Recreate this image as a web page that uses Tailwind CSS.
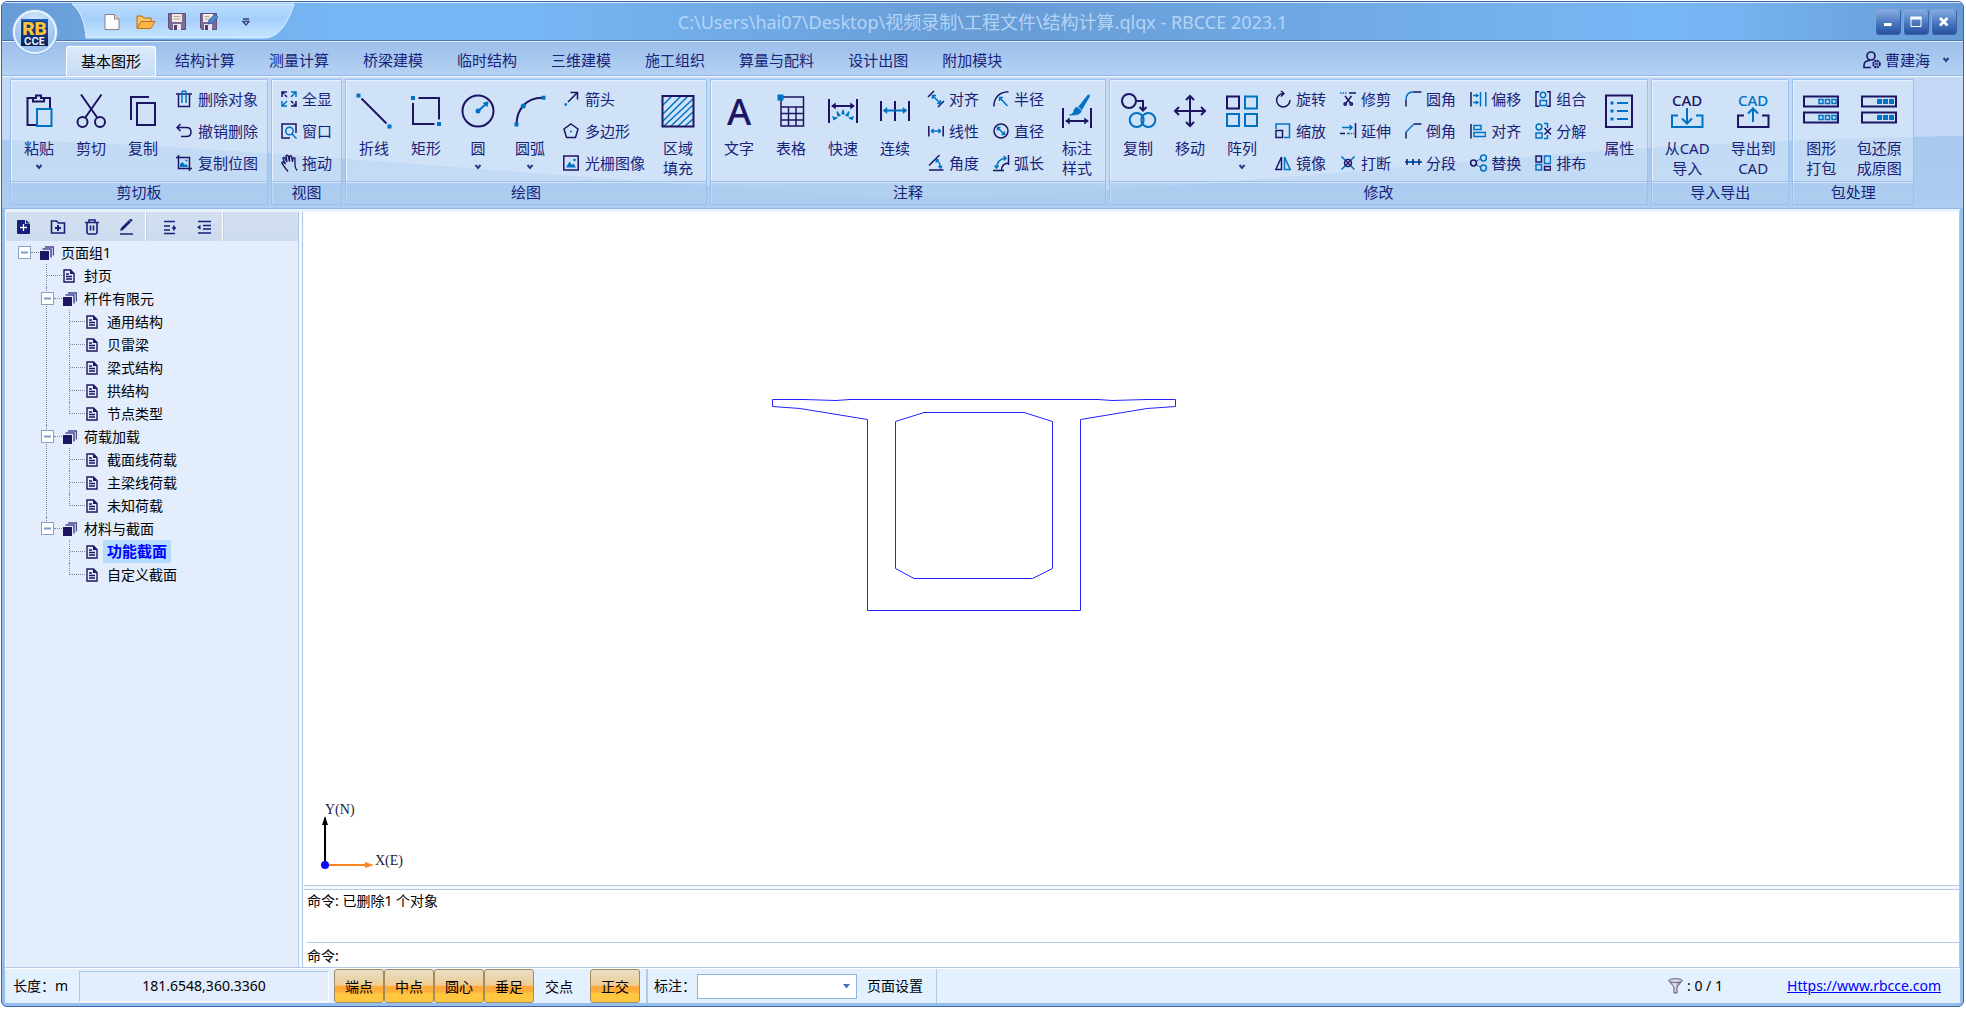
<!DOCTYPE html>
<html lang="zh-CN">
<head>
<meta charset="utf-8">
<title>RBCCE 2023.1</title>
<script src="https://cdn.jsdelivr.net/npm/@tailwindcss/browser@4"></script>
</head>
<body class="h-screen overflow-hidden bg-white pt-px pr-[2px] pb-[2px] pl-px font-['Noto_Sans','Noto_Sans_CJK_SC',sans-serif] text-sm text-black">
<div class="relative flex h-full flex-col overflow-hidden rounded-md border border-[#3c66a8] bg-[#96bfee]">

  <!-- Title bar -->
  <header class="relative flex h-[39px] shrink-0 items-center border-t border-b border-t-[#d5e8fc] border-b-[#4a74b8] bg-[linear-gradient(90deg,#679cd5_0%,#77b6f5_17%,#77b6f5_27%,#679cd5_50%,#77b6f5_84%,#76b4f3_88%,#659ad3_100%)]">
    <svg class="absolute top-0 left-[66px] h-[36px] w-[230px]" viewBox="0 0 230 36" fill="none">
      <defs><linearGradient id="qa" x1="0" y1="0" x2="0" y2="1"><stop offset="0" stop-color="#b9dcfd"/><stop offset=".45" stop-color="#a5d0fb"/><stop offset="1" stop-color="#c6e4fe"/></linearGradient></defs>
      <path d="M4 1C13 8 17 20 18 35H196C212 35 221 17 226 1Z" fill="url(#qa)" stroke="#dceefe"/>
    </svg>
    <nav class="relative ml-[102px] flex items-center gap-4">
      <button aria-label="新建"><svg class="size-4" viewBox="0 0 16 16"><path d="M1 .5h9.500L15 5v10.500H1Z" fill="#fff" stroke="#8d7f82"/><path d="M10.500.5V5H15" fill="#e8dcd4" stroke="#8d7f82"/></svg></button>
      <button aria-label="打开"><svg class="-mr-1 h-4 w-5" viewBox="0 0 20 16"><path d="M1 14V2h5l2 2h7v4" fill="#f7c56e" stroke="#b8690f"/><path d="M1 14.500 5 7.500h14l-4 7Z" fill="#fdb64a" stroke="#c46f14"/></svg></button>
      <button aria-label="保存"><svg class="-mr-0.5 size-[18px]" viewBox="0 0 18 18"><path d="M.5.5h17v16H2L.5 15Z" fill="#7c6c94" stroke="#5e4f7c"/><path d="M4 1h10v8H4Z" fill="#f2ece4"/><path d="M5.500 3.500h7M5.500 6h7" stroke="#b9a58f"/><path d="M5 11h8v6H5Z" fill="#e9e4ee"/><path d="M6 12h3v5H6Z" fill="#4e3f6c"/></svg></button>
      <button aria-label="另存为"><svg class="size-[18px]" viewBox="0 0 18 18"><path d="M.5.5h16v16H2L.5 15Z" fill="#7c6c94" stroke="#5e4f7c"/><path d="M3 1h10v8H3Z" fill="#f2ece4"/><path d="M4.500 3.500h5M4.500 6h5" stroke="#b9a58f"/><path d="M4 11h8v6H4Z" fill="#e9e4ee"/><path d="M5 12h3v5H5Z" fill="#4e3f6c"/><path d="M8 11 9 7l6-6 3 3-6 6Z" fill="#4f86c9" stroke="#2f5fa3" stroke-width=".8"/></svg></button>
      <button aria-label="自定义快速访问工具栏" class="ml-2"><svg class="h-2 w-2" viewBox="0 0 8 8" fill="none"><path d="M1 1h6M1 3.500 4 7l3-3.500Z" stroke="#2a4280" stroke-width="1.300" fill="#fff"/></svg></button>
    </nav>
    <h1 class="absolute inset-x-0 mx-auto w-fit text-lg whitespace-nowrap text-[#b4d4f6]">C:\Users\hai07\Desktop\视频录制\工程文件\结构计算.qlqx - RBCCE 2023.1</h1>
    <div class="relative mr-[6px] ml-auto flex gap-[2px]">
      <button aria-label="最小化" class="flex size-[26px] items-center justify-center rounded-sm border border-[#3d62a8] border-t-[#7fa6dc] border-l-[#7fa6dc] bg-linear-to-b from-[#86aadf] via-[#4e7cc2] to-[#28509f]"><svg class="size-4" viewBox="0 0 16 16"><path d="M4 10.500h7.500" stroke="#fff" stroke-width="3"/></svg></button>
      <button aria-label="最大化" class="flex size-[26px] items-center justify-center rounded-sm border border-[#3d62a8] border-t-[#7fa6dc] border-l-[#7fa6dc] bg-linear-to-b from-[#86aadf] via-[#4e7cc2] to-[#28509f]"><svg class="size-4" viewBox="0 0 16 16" fill="none"><path d="M3 3.500h10v9H3Z" stroke="#fff"/><path d="M2.500 4h11" stroke="#fff" stroke-width="3"/></svg></button>
      <button aria-label="关闭" class="flex size-[26px] items-center justify-center rounded-sm border border-[#3d62a8] border-t-[#7fa6dc] border-l-[#7fa6dc] bg-linear-to-b from-[#86aadf] via-[#4e7cc2] to-[#28509f]"><svg class="size-4" viewBox="0 0 16 16"><path d="m4 4 7.500 7.500m0-7.500L4 11.500" stroke="#fff" stroke-width="2.600"/></svg></button>
    </div>
  </header>

  <!-- Ribbon tabs -->
  <div class="flex h-[34px] shrink-0 items-end border-t border-[#e6f1fd] bg-linear-to-b from-[#9bbfeb] to-[#b4d1f2] pl-16 text-[15px] text-[#17237a]">
    <nav class="flex h-[29px] gap-1 whitespace-nowrap">
      <button class="relative z-10 -mb-px h-[30px] rounded-t-[3px] border border-b-0 border-white bg-linear-to-b from-[#dceafa] to-[#c6dbf5] px-[14px] text-black">基本图形</button>
      <button class="px-[15px]">结构计算</button>
      <button class="px-[15px]">测量计算</button>
      <button class="px-[15px]">桥梁建模</button>
      <button class="px-[15px]">临时结构</button>
      <button class="px-[15px]">三维建模</button>
      <button class="px-[15px]">施工组织</button>
      <button class="px-[15px]">算量与配料</button>
      <button class="px-[15px]">设计出图</button>
      <button class="px-[15px]">附加模块</button>
    </nav>
    <button class="mr-[13px] mb-[4px] ml-auto flex items-center gap-1">
      <svg class="size-[18px]" viewBox="0 0 18 18" fill="none" stroke="#1e1464" stroke-width="1.600"><circle cx="8" cy="5" r="4"/><path d="M8 16.500H1v-2C1 11 3.500 9.500 7 9.500"/><circle cx="13.500" cy="13" r="3.300" stroke-dasharray="2 .6" stroke-width="2"/><circle cx="13.500" cy="13" r="1" stroke-width="1"/></svg>
      <span>曹建海</span>
      <svg class="ml-2 size-2" viewBox="0 0 8 8" fill="none"><path d="m1.500 2 2.500 3 2.500-3" stroke="#2a3a86" stroke-width="2"/></svg>
    </button>
  </div>

  <!-- Ribbon -->
  <section class="relative flex h-[134px] shrink-0 gap-[3px] border-y border-[#8fb6e6] bg-[#c3d9f5] fill-none stroke-[#1e1464] stroke-2 pt-[3px] pl-2 text-[15px] leading-5 whitespace-nowrap text-[#17237a] shadow-[inset_0_1px_0_#f4f9ff]">
    <svg class="absolute inset-0 size-full" viewBox="0 0 1960 132" preserveAspectRatio="none" stroke="none">
      <defs><linearGradient id="wv" x1="0" y1="0" x2="0" y2="1"><stop offset="0" stop-color="#9cc0ec" stop-opacity=".65"/><stop offset="1" stop-color="#aecdf1"/></linearGradient></defs>
      <path d="M0 64C260 70 560 104 900 122C1250 118 1500 66 1960 60V132H0Z" fill="url(#wv)"/>
    </svg>

    <div class="relative flex flex-col self-start border border-[#9dc0ea] bg-[#dcebfa]/50 shadow-[inset_1px_1px_0_#e8f2fd]">
      <div class="flex h-[101px] px-[2px] pt-[3px]">
        <button class="flex w-[52px] flex-col items-center pt-[10px]"><svg class="mb-[9px] size-9" viewBox="0 0 36 36"><path d="M15 32H6.500V5H12M23 5h6v10M12 8.500V5h3V2.500h5V5h3v3.500Z"/><path d="M16 16h14.500v17H16Z" stroke="#0072c4"/></svg>粘贴<svg class="mt-[5px] size-2" viewBox="0 0 8 8"><path d="m1.500 2 2.500 3 2.500-3" stroke="#2a3a86"/></svg></button>
        <button class="flex w-[52px] flex-col items-center pt-[10px]"><svg class="mb-[9px] size-9" viewBox="0 0 36 36"><circle cx="9.500" cy="29" r="5"/><circle cx="27" cy="29" r="5"/><path d="M8 1.500 24.500 25M28.500 1.500 12 25"/></svg>剪切</button>
        <button class="flex w-[52px] flex-col items-center pt-[10px]"><svg class="mb-[9px] size-9" viewBox="0 0 36 36"><path d="M24 4H6v23M12 10h18v22H12Z"/></svg>复制</button>
        <div class="flex flex-col">
          <button class="flex h-8 items-center gap-[6px] px-[7px]"><svg class="size-4 overflow-visible stroke-[1.500]" viewBox="0 0 16 16"><path d="M0 3h16M2.500 3v12.500h11V3"/><path d="M6 12V1.500Q6 0 8 0t2 1.500V12" stroke="#0072c4"/></svg>删除对象</button>
          <button class="flex h-8 items-center gap-[6px] px-[7px]"><svg class="size-4 stroke-[1.500]" viewBox="0 0 16 16"><path d="M4.500 1 1 4.500 4.500 8M1 4.500h9.500q4.500 0 4.500 4.500t-4.500 4.500H5"/></svg>撤销删除</button>
          <button class="flex h-8 items-center gap-[6px] px-[7px]"><svg class="size-4 stroke-[1.500]" viewBox="0 0 16 16"><path d="M2.500 0v13.500H16M0 2.500h13.500V16"/><path d="M4 12V9l2.500-2 2.500 3 1.500-1L12 12Z" fill="#0072c4" stroke="none"/><path d="M9.500 5.500h2" stroke="#0072c4"/></svg>复制位图</button>
        </div>
      </div>
      <h2 class="h-[23px] border-t border-[#9dc0ea] bg-[#96bdea]/50 text-center leading-5 shadow-[inset_0_1px_0_#d5e6fa]">剪切板</h2>
    </div>

    <div class="relative flex flex-col self-start border border-[#9dc0ea] bg-[#dcebfa]/50 shadow-[inset_1px_1px_0_#e8f2fd]">
      <div class="flex h-[101px] px-[2px] pt-[3px]">
        <div class="flex flex-col">
          <button class="flex h-8 items-center gap-[5px] px-[7px]"><svg class="size-4 stroke-[1.500]" viewBox="0 0 16 16"><path d="M1 6V1h5M10 15h5v-5"/><path d="M1 1l5 5M10 10l5 5" stroke-dasharray="3 1"/><path d="M10 1h5v5M6 15H1v-5M15 1l-5 5M1 15l5-5" stroke="#0072c4"/></svg>全显</button>
          <button class="flex h-8 items-center gap-[5px] px-[7px]"><svg class="size-4 stroke-[1.500]" viewBox="0 0 16 16"><path d="M9 15H1V1h14v9"/><circle cx="8.500" cy="8" r="3.700" stroke="#0072c4"/><path d="m11 11 4.500 4.500" stroke="#0072c4"/></svg>窗口</button>
          <button class="flex h-8 items-center gap-[5px] px-[7px]"><svg class="size-4 overflow-visible stroke-[1.300]" viewBox="0 0 16 16"><path d="M5 14 1 8.500Q.5 7 2 7l2.500 2L2 3.500Q2 2 3.500 2.500L6 7 5 1q.5-1.500 2-.5l1.500 6V1.500Q10 0 10.500 1.500l1 5.500.5-4q1.500-1 2 .5V10q0 3 2 5.500M5 14l2 2.500"/></svg>拖动</button>
        </div>
      </div>
      <h2 class="h-[23px] border-t border-[#9dc0ea] bg-[#96bdea]/50 text-center leading-5 shadow-[inset_0_1px_0_#d5e6fa]">视图</h2>
    </div>

    <div class="relative flex flex-col self-start border border-[#9dc0ea] bg-[#dcebfa]/50 shadow-[inset_1px_1px_0_#e8f2fd]">
      <div class="flex h-[101px] px-[2px] pt-[3px]">
        <button class="flex w-[52px] flex-col items-center pt-[10px]"><svg class="mb-[9px] size-9" viewBox="0 0 36 36"><path d="m5.500 5.500 25 25"/><path d="M.5 2.500H4.500M31.500 33.500h4" stroke="#0072c4" stroke-width="4"/></svg>折线</button>
        <button class="flex w-[52px] flex-col items-center pt-[10px]"><svg class="mb-[9px] size-9" viewBox="0 0 36 36"><path d="M10.500 5H31v21.500M5 10v21h21.500"/><path d="M3 5h4M29 31h4" stroke="#0072c4" stroke-width="4"/></svg>矩形</button>
        <button class="flex w-[52px] flex-col items-center pt-[10px]"><svg class="mb-[9px] size-9" viewBox="0 0 36 36"><circle cx="18" cy="18" r="15.500"/><g stroke="#0072c4"><circle cx="18" cy="18" r="1.500" fill="#0072c4"/><path d="m18 18 8-7"/><path d="m23.500 10 4.500-1-1 4.500Z" fill="#0072c4" stroke-width="1"/></g></svg>圆<svg class="mt-[5px] size-2" viewBox="0 0 8 8"><path d="m1.500 2 2.500 3 2.500-3" stroke="#2a3a86"/></svg></button>
        <button class="flex w-[52px] flex-col items-center pt-[10px]"><svg class="mb-[9px] size-9" viewBox="0 0 36 36"><path d="M4.500 31C5 15 15 5 30 4.700"/><path d="M2.500 31.500h4M29.500 4.700h4" stroke="#0072c4" stroke-width="4"/><circle cx="11.300" cy="13" r="2.500" fill="#0072c4" stroke="none"/></svg>圆弧<svg class="mt-[5px] size-2" viewBox="0 0 8 8"><path d="m1.500 2 2.500 3 2.500-3" stroke="#2a3a86"/></svg></button>
        <div class="flex flex-col">
          <button class="flex h-8 items-center gap-[6px] px-[7px]"><svg class="size-4 stroke-[1.500]" viewBox="0 0 16 16"><path d="m5 11 9.500-9.500M7.500 1.500h7v7"/><path d="M1.500 13.500h2.500" stroke="#0072c4" stroke-width="2.500"/></svg>箭头</button>
          <button class="flex h-8 items-center gap-[6px] px-[7px]"><svg class="size-4 stroke-[1.500]" viewBox="0 0 16 16"><path d="m8 1 7 5-2.500 8.500h-9L1 6Z"/><path d="M7 8.500h2" stroke="#0072c4"/></svg>多边形</button>
          <button class="flex h-8 items-center gap-[6px] px-[7px]"><svg class="size-4 stroke-[1.500]" viewBox="0 0 16 16"><path d="M.8 1h14.400v14H.8Z"/><path d="m3 12.500 3.500-6L9 10l1.500-1.500 2.500 4Z" fill="#0072c4" stroke="none"/><circle cx="11.500" cy="5" r="1.300" fill="#0072c4" stroke="none"/></svg>光栅图像</button>
        </div>
        <button class="flex w-[52px] flex-col items-center pt-[10px]"><svg class="mb-[9px] size-9" viewBox="0 0 36 36"><path d="M3 12 12 3M3 21 21 3M3 28 28 3M4 33 33 6M11 33 33 12M18 33 33 19M25 33l8-7" stroke="#0072c4" stroke-width="1.500"/><path d="M2.500 3h31v30.500h-31Z"/></svg>区域<br>填充</button>
      </div>
      <h2 class="h-[23px] border-t border-[#9dc0ea] bg-[#96bdea]/50 text-center leading-5 shadow-[inset_0_1px_0_#d5e6fa]">绘图</h2>
    </div>

    <div class="relative flex flex-col self-start border border-[#9dc0ea] bg-[#dcebfa]/50 shadow-[inset_1px_1px_0_#e8f2fd]">
      <div class="flex h-[101px] px-[2px] pt-[3px]">
        <button class="flex w-[52px] flex-col items-center pt-[10px]"><span class="mb-[9px] flex h-9 items-center text-[37px] font-medium text-[#1e1464]">A</span>文字</button>
        <button class="flex w-[52px] flex-col items-center pt-[10px]"><svg class="mb-[9px] size-9" viewBox="0 0 36 36"><path d="M8 4h22.500v29H8Z" stroke-width="1.500"/><path d="M8 14h22.500M8 20.500h22.500M8 27h22.500M15.500 14v19M23 14v19" stroke-width="1.500"/><path d="M4.500 4.500h6" stroke="#0072c4" stroke-width="6"/></svg>表格</button>
        <button class="flex w-[52px] flex-col items-center pt-[10px]"><svg class="mb-[9px] size-9" viewBox="0 0 36 36"><path d="M4 6v24M32 6v24M7 13h22"/><path d="m10.500 10-4 3 4 3ZM25.500 10l4 3-4 3Z" fill="#1e1464" stroke-width=".5"/><path d="m8 24 3.500 1-2.500 1.500ZM12 18.500l3 4-2 .5ZM18 17l1 4h-2ZM24 18.500l-3 4 2 .5ZM28 24l-3.500 1 2.500 1.500Z" fill="#0072c4" stroke="#0072c4" stroke-width="1.200"/></svg>快速</button>
        <button class="flex w-[52px] flex-col items-center pt-[10px]"><svg class="mb-[9px] size-9" viewBox="0 0 36 36"><path d="M4 8v20M18 8v20M32 8v20"/><g stroke="#0072c4" fill="#0072c4"><path d="M7 17.500h22"/><path d="m10 14.500-4 3 4 3ZM26 14.500l4 3-4 3Z" stroke-width=".5"/></g></svg>连续</button>
        <div class="flex flex-col">
          <button class="flex h-8 items-center gap-[5px] px-[7px]"><svg class="size-4 overflow-visible stroke-[1.500]" viewBox="0 0 16 16"><path d="M0 6 6 0M10 16l6-6"/><path d="m5 5 7 7M4.500 8V4.500H8M9 12.500h3.500V9" stroke="#0072c4"/></svg>对齐</button>
          <button class="flex h-8 items-center gap-[5px] px-[7px]"><svg class="size-4 stroke-[1.500]" viewBox="0 0 16 16"><path d="M.8 3v10.500M15.200 3v10.500"/><path d="M3 8h10M5.500 6 3.500 8l2 2M10.500 6l2 2-2 2" stroke="#0072c4"/></svg>线性</button>
          <button class="flex h-8 items-center gap-[5px] px-[7px]"><svg class="size-4 stroke-[1.500]" viewBox="0 0 16 16"><path d="M1 10.500 11.500 0M1 15h14.500"/><path d="M8.500 5q4 3 4 8M8 7.500l.5-2.700 2.500.2M10.500 11l2 2 1.500-2" stroke="#0072c4"/></svg>角度</button>
        </div>
        <div class="flex flex-col">
          <button class="flex h-8 items-center gap-[5px] px-[7px]"><svg class="size-4 stroke-[1.500]" viewBox="0 0 16 16"><path d="M.8 15.500Q1.500 1.500 15.500.8"/><path d="M14.500 15 6.500 6.500M6.500 10V6.500H10" stroke="#0072c4"/></svg>半径</button>
          <button class="flex h-8 items-center gap-[5px] px-[7px]"><svg class="size-4 stroke-[1.500]" viewBox="0 0 16 16"><circle cx="8" cy="8" r="7"/><path d="m4.500 4.500 7 7M4.500 7.500v-3h3M8.500 11.500h3v-3" stroke="#0072c4"/></svg>直径</button>
          <button class="flex h-8 items-center gap-[5px] px-[7px]"><svg class="size-4 overflow-visible stroke-[1.500]" viewBox="0 0 16 16"><path d="M15.500 0v10M0 15.500h11M8.500 15.500q0-7 7-7.500"/><path d="M3.500 13Q4 4.500 12.500 3M1.500 10.500l2 2.500 2-2.500M10.500 1l2.500 2-2 2.500" stroke="#0072c4"/></svg>弧长</button>
        </div>
        <button class="flex w-[52px] flex-col items-center pt-[10px]"><svg class="mb-[9px] size-9" viewBox="0 0 36 36"><path d="M4 15v20M32 15v20M7 28h22"/><path d="m10.500 25-4 3 4 3ZM25.500 25l4 3-4 3Z" fill="#1e1464" stroke-width=".5"/><path d="M10.500 22q4.500-1 4.500-5 1.500-3.500 4.500-3L29 2q2-.5 1.500 1.500L22.500 17q0 5.500-12 5Z" fill="#0072c4" stroke="#0072c4" stroke-width=".8"/><path d="m17.500 13 5 4" stroke="#cfe1f7" stroke-width="1"/></svg>标注<br>样式</button>
      </div>
      <h2 class="h-[23px] border-t border-[#9dc0ea] bg-[#96bdea]/50 text-center leading-5 shadow-[inset_0_1px_0_#d5e6fa]">注释</h2>
    </div>

    <div class="relative flex flex-col self-start border border-[#9dc0ea] bg-[#dcebfa]/50 shadow-[inset_1px_1px_0_#e8f2fd]">
      <div class="flex h-[101px] px-[2px] pt-[3px]">
        <button class="flex w-[52px] flex-col items-center pt-[10px]"><svg class="mb-[9px] size-9 overflow-visible" viewBox="0 0 36 36"><circle cx="9" cy="8" r="7"/><path d="M16 8h7v9M19.500 14l3.500 3.500 3.500-3.500"/><circle cx="16.700" cy="27" r="7" stroke="#0072c4"/><circle cx="28.300" cy="27" r="7" stroke="#0072c4"/></svg>复制</button>
        <button class="flex w-[52px] flex-col items-center pt-[10px]"><svg class="mb-[9px] size-9" viewBox="0 0 36 36"><path d="M18 3v30M3 18h30M14 7l4-4 4 4M14 29l4 4 4-4M7 14l-4 4 4 4M29 14l4 4-4 4"/></svg>移动</button>
        <button class="flex w-[52px] flex-col items-center pt-[10px]"><svg class="mb-[9px] size-9" viewBox="0 0 36 36"><path d="M3 3.500h12v12H3Z"/><path d="M21 3.500h12v12H21ZM3 21h12v12H3ZM21 21h12v12H21Z" stroke="#0072c4"/></svg>阵列<svg class="mt-[5px] size-2" viewBox="0 0 8 8"><path d="m1.500 2 2.500 3 2.500-3" stroke="#2a3a86"/></svg></button>
        <div class="flex flex-col">
          <button class="flex h-8 items-center gap-[5px] px-[7px]"><svg class="size-4 overflow-visible stroke-[1.500]" viewBox="0 0 16 16"><path d="M15 9A6.700 6.700 0 1 1 8 2.500M6 0l3 2.500-3 3"/></svg>旋转</button>
          <button class="flex h-8 items-center gap-[5px] px-[7px]"><svg class="size-4 stroke-[1.500]" viewBox="0 0 16 16"><path d="M1 6V1h13.500v13.500H9" stroke="#0072c4"/><path d="M1 7.500h6.500v7H1Z"/></svg>缩放</button>
          <button class="flex h-8 items-center gap-[5px] px-[7px]"><svg class="size-4 stroke-[1.500]" viewBox="0 0 16 16"><path d="M6.500 2v12.500H.8Z"/><path d="M9.500 2v12.500h5.700Z" stroke="#0072c4"/></svg>镜像</button>
        </div>
        <div class="flex flex-col">
          <button class="flex h-8 items-center gap-[5px] px-[7px]"><svg class="size-4 stroke-[1.500]" viewBox="0 0 16 16"><path d="M0 2h7" stroke="#0072c4" stroke-dasharray="1.500 1"/><path d="M9 2h7M5 5l5.500 7M11.500 5 6 12"/><circle cx="5.200" cy="13" r="1.200"/><circle cx="11.300" cy="13" r="1.200"/></svg>修剪</button>
          <button class="flex h-8 items-center gap-[5px] px-[7px]"><svg class="size-4 overflow-visible stroke-[1.500]" viewBox="0 0 16 16"><path d="M15.500 0v15M0 10.500h5"/><path d="M2 4.500h10M9.500 2l2.500 2.500L9.500 7" stroke="#0072c4"/><path d="M7 10.500h7" stroke="#0072c4" stroke-dasharray="3 1 1 1"/></svg>延伸</button>
          <button class="flex h-8 items-center gap-[5px] px-[7px]"><svg class="size-4 stroke-[1.500]" viewBox="0 0 16 16"><path d="M1.500 1.500 6 6M14.500 1.500 10 6M1.500 14.500 6 10M14.500 14.500 10 10" stroke="#0072c4"/><circle cx="8" cy="8" r="3.500"/><path d="m6 6 4 4m0-4-4 4"/></svg>打断</button>
        </div>
        <div class="flex flex-col">
          <button class="flex h-8 items-center gap-[5px] px-[7px]"><svg class="size-4 overflow-visible stroke-[1.500]" viewBox="0 0 16 16"><path d="M1 15.500V9M8 1h8.500"/><path d="M1 9q0-8 7-8" stroke="#0072c4"/></svg>圆角</button>
          <button class="flex h-8 items-center gap-[5px] px-[7px]"><svg class="size-4 overflow-visible stroke-[1.500]" viewBox="0 0 16 16"><path d="M1 15.500V9M9 1h7.500"/><path d="m1 9 8-8" stroke="#0072c4"/></svg>倒角</button>
          <button class="flex h-8 items-center gap-[5px] px-[7px]"><svg class="size-4 overflow-visible stroke-[1.500]" viewBox="0 0 16 16"><path d="M0 7h17" stroke="#0072c4" stroke-width="2"/><path d="M2 4v6M8 4v6M14 4v6"/></svg>分段</button>
        </div>
        <div class="flex flex-col">
          <button class="flex h-8 items-center gap-[5px] px-[7px]"><svg class="size-4 overflow-visible stroke-[1.500]" viewBox="0 0 16 16"><path d="M1 1v14.500"/><path d="M10.500 1v14.500M15.800 1v14.500M3 4.500h5M6 3l2 1.500L6 6M3 11.500h5M6 10l2 1.500L6 13" stroke="#0072c4"/></svg>偏移</button>
          <button class="flex h-8 items-center gap-[5px] px-[7px]"><svg class="size-4 stroke-[1.500]" viewBox="0 0 16 16"><path d="M1 1v14.500"/><path d="M4 2.500h7v4H4ZM4 9.500h11.500v4H4Z" stroke="#0072c4"/></svg>对齐</button>
          <button class="flex h-8 items-center gap-[5px] px-[7px]"><svg class="size-4 overflow-visible stroke-[1.500]" viewBox="0 0 16 16"><circle cx="3.500" cy="8" r="2.900"/><g stroke="#0072c4"><circle cx="13.500" cy="3" r="2.900"/><circle cx="13.500" cy="13" r="2.900"/><path d="m7 6 3-2M7 10l3 2" stroke-dasharray="1.500 1"/></g></svg>替换</button>
        </div>
        <div class="flex flex-col">
          <button class="flex h-8 items-center gap-[5px] px-[7px]"><svg class="size-4 overflow-visible stroke-[1.500]" viewBox="0 0 16 16"><path d="M4 .8H1v14.400h3M12 .8h3v14.400h-3"/><circle cx="8" cy="4" r="2.700" stroke="#0072c4"/><path d="M5 9.500h6.500v5H5Z" stroke="#0072c4"/></svg>组合</button>
          <button class="flex h-8 items-center gap-[5px] px-[7px]"><svg class="size-4 overflow-visible stroke-[1.500]" viewBox="0 0 16 16"><g stroke="#0072c4"><circle cx="4" cy="4" r="2.900"/><path d="M1 10h6v5H1ZM9 .5h3.500V5M9 15.500h3.500V12"/></g><path d="m9.500 5 6.500 6.500M16 5 9.500 11.500"/></svg>分解</button>
          <button class="flex h-8 items-center gap-[5px] px-[7px]"><svg class="size-4 stroke-[1.500]" viewBox="0 0 16 16"><path d="M1 1h5.500v6H1ZM9.500 11.500h6v3.500h-6Z"/><path d="M9.500 1h6v7.500h-6ZM1 9.500h5.500V15H1Z" stroke="#0072c4"/></svg>排布</button>
        </div>
        <button class="flex w-[52px] flex-col items-center pt-[10px]"><svg class="mb-[9px] size-9" viewBox="0 0 36 36"><path d="M5 2.500h26v31.500H5Z"/><path d="M9.500 10h3M9.500 18h3M9.500 26h3" stroke="#0072c4" stroke-width="3"/><path d="M16 10h11M16 18h11M16 26h11" stroke="#0072c4"/></svg>属性</button>
      </div>
      <h2 class="h-[23px] border-t border-[#9dc0ea] bg-[#96bdea]/50 text-center leading-5 shadow-[inset_0_1px_0_#d5e6fa]">修改</h2>
    </div>

    <div class="relative flex flex-col self-start border border-[#9dc0ea] bg-[#dcebfa]/50 shadow-[inset_1px_1px_0_#e8f2fd]">
      <div class="flex h-[101px] px-[2px] pt-[3px]">
        <button class="flex w-[66px] flex-col items-center pt-[10px]"><span class="mb-[9px] flex h-9 flex-col items-center leading-[14px] font-medium text-[#1e1464]">CAD<svg class="h-[22px] w-9" viewBox="0 0 36 22"><path d="M9 8.500H3V20h30.500V8.500H27M18 1v15M13 11.500l5 5 5-5" stroke="#0072c4"/></svg></span>从CAD<br>导入</button>
        <button class="flex w-[66px] flex-col items-center pt-[10px]"><span class="mb-[9px] flex h-9 flex-col items-center leading-[14px] font-medium text-[#0072c4]">CAD<svg class="h-[22px] w-9" viewBox="0 0 36 22"><path d="M9 8.500H3V20h30.500V8.500H27"/><path d="M18 15V1.500M13 6.500l5-5 5 5" stroke="#0072c4"/></svg></span>导出到<br>CAD</button>
      </div>
      <h2 class="h-[23px] border-t border-[#9dc0ea] bg-[#96bdea]/50 text-center leading-5 shadow-[inset_0_1px_0_#d5e6fa]">导入导出</h2>
    </div>

    <div class="relative flex flex-col self-start border border-[#9dc0ea] bg-[#dcebfa]/50 shadow-[inset_1px_1px_0_#e8f2fd]">
      <div class="flex h-[101px] px-[2px] pt-[3px]">
        <button class="flex w-[52px] flex-col items-center pt-[10px]"><svg class="mb-[9px] size-9" viewBox="0 0 36 36"><path d="M1 3.500h34v10H1ZM1 19.500h34v10H1Z"/><path d="M16 6.500h4v4h-4ZM22.500 6.500h4v4h-4ZM29 6.500h4v4h-4ZM16 22.500h4v4h-4ZM22.500 22.500h4v4h-4ZM29 22.500h4v4h-4Z" stroke="#0072c4" stroke-width="1.500"/></svg>图形<br>打包</button>
        <button class="flex w-[64px] flex-col items-center pt-[10px]"><svg class="mb-[9px] size-9" viewBox="0 0 36 36"><path d="M1 3.500h34v10H1ZM1 19.500h34v10H1Z"/><path d="M16 6h5v5h-5ZM22 6h5v5h-5ZM28 6h5v5h-5ZM16 22h5v5h-5ZM22 22h5v5h-5ZM28 22h5v5h-5Z" fill="#0072c4" stroke="none"/></svg>包还原<br>成原图</button>
      </div>
      <h2 class="h-[23px] border-t border-[#9dc0ea] bg-[#96bdea]/50 text-center leading-5 shadow-[inset_0_1px_0_#d5e6fa]">包处理</h2>
    </div>
  </section>

  <!-- Work area -->
  <main class="mx-[3px] flex min-h-0 flex-1 border-t-[3px] border-r border-b border-[#b4c9e6] border-t-[#eaf2fd] bg-[#f4f9ff]">
    <aside class="flex w-[294px] shrink-0 flex-col border-r border-l border-[#b4c9e6] border-l-white bg-[#e3edfc]">
      <div class="flex h-[29px] items-center bg-linear-to-b from-[#d3e0f0] to-[#ccdbee] pl-[9px] text-[#15207a]">
        <button aria-label="新建页面" class="w-[34px] pl-px"><svg class="size-4" viewBox="0 0 16 16"><path d="M1 2q0-1 1-1h7v4h5v9q0 1-1 1H2q-1 0-1-1Z" fill="currentColor"/><path d="m10 1 4 3.500h-4Z" fill="currentColor"/><path d="M4 8.500h7M7.500 5v7" stroke="#fff" stroke-width="1.300"/></svg></button>
        <button aria-label="新建页面组" class="w-[34px] pl-px"><svg class="size-4" viewBox="0 0 16 16" fill="none" stroke="currentColor" stroke-width="1.600"><path d="M1.500 2h5l2 2h6v10h-13Z"/><path d="M5 9h6M8 6v6" stroke-width="2"/></svg></button>
        <button aria-label="删除" class="w-[34px] pl-px"><svg class="size-4" viewBox="0 0 16 16" fill="none" stroke="currentColor" stroke-width="1.600"><path d="M1 3.500h14M5 3.500V1h6v2.500M3 3.500V13q0 2 2 2h6q2 0 2-2V3.500M6.500 6.500v5M9.500 6.500v5"/></svg></button>
        <button aria-label="编辑" class="w-[28px] pl-px"><svg class="size-4" viewBox="0 0 16 16"><path d="m2 12 1-3 8-8 2 2-8 8Z" fill="currentColor"/><path d="m12 0 2 2" stroke="currentColor" stroke-width="2"/><path d="M2 15h13" stroke="currentColor" stroke-width="1.600"/></svg></button>
        <span class="h-full w-[2px] border-l border-white bg-[#bccde4]"></span>
        <button aria-label="增加缩进" class="ml-[15px] w-[34px]"><svg class="size-4" viewBox="0 0 16 16"><path d="M2 2.500h11M2 7h6M2 11h6M2 14.500h11" stroke="currentColor" stroke-width="1.600"/><path d="M10 9h4m-2-2.500v5" stroke="currentColor" stroke-width="1.600"/></svg></button>
        <button aria-label="减少缩进" class="w-[26px]"><svg class="size-4" viewBox="0 0 16 16"><path d="M2 2.500h13M7 6.500h8M7 10h8M2 14h13" stroke="currentColor" stroke-width="1.300"/><path d="m1 8.300 3.500-2.500v5Z" fill="currentColor"/></svg></button>
        <span class="h-full w-[2px] border-l border-white bg-[#bccde4]"></span>
      </div>

      <ul class="pl-3 leading-[23px] whitespace-nowrap">
        <li>
          <div class="flex h-[23px] items-center"><button aria-label="折叠" class="size-[13px] border border-[#8ba0c8] bg-white"><svg class="size-[11px]" viewBox="0 0 11 11"><path d="M2 5.500h7" stroke="#7d9cc9" stroke-width="2"/></svg></button><span class="mr-px w-2 border-t border-dotted border-[#7c86a0]"></span><svg class="mr-[3px] size-[14px]" viewBox="0 0 14 14"><path d="M0 5h9v9H0Z" fill="#1e1464"/><path d="M2.500 3h8.500v8.500M5 1h8.500v8.500" stroke="#4a4a92" stroke-width="1.500" fill="none"/></svg><span class="px-1">页面组1</span></div>
          <ul class="pl-[23px]">
            <li class="relative before:absolute before:top-0 before:left-[5px] before:h-full before:border-l before:border-dotted before:border-[#7c86a0]">
              <div class="flex h-[23px] items-center"><span class="mr-px ml-[6px] w-[15px] border-t border-dotted border-[#7c86a0]"></span><svg class="mr-[3px] size-[14px]" viewBox="0 0 14 14"><path d="M1 1h6.500L11 4.500V13H1Z" fill="none" stroke="#1e1464" stroke-width="1.400"/><path d="M3 5h3M3 7.500h6M3 10h6" stroke="#1e1464" stroke-width="1.300"/><path d="M7 1v4h4Z" fill="#1e1464"/></svg><span class="px-1">封页</span></div>
            </li>
            <li class="relative before:absolute before:top-0 before:left-[5px] before:h-full before:border-l before:border-dotted before:border-[#7c86a0]">
              <div class="relative flex h-[23px] items-center"><button aria-label="折叠" class="size-[13px] border border-[#8ba0c8] bg-white"><svg class="size-[11px]" viewBox="0 0 11 11"><path d="M2 5.500h7" stroke="#7d9cc9" stroke-width="2"/></svg></button><span class="mr-px w-2 border-t border-dotted border-[#7c86a0]"></span><svg class="mr-[3px] size-[14px]" viewBox="0 0 14 14"><path d="M0 5h9v9H0Z" fill="#1e1464"/><path d="M2.500 3h8.500v8.500M5 1h8.500v8.500" stroke="#4a4a92" stroke-width="1.500" fill="none"/></svg><span class="px-1">杆件有限元</span></div>
              <ul class="pl-[23px]">
                <li class="relative before:absolute before:top-0 before:left-[5px] before:h-full before:border-l before:border-dotted before:border-[#7c86a0]"><div class="flex h-[23px] items-center"><span class="mr-px ml-[6px] w-[15px] border-t border-dotted border-[#7c86a0]"></span><svg class="mr-[3px] size-[14px]" viewBox="0 0 14 14"><path d="M1 1h6.500L11 4.500V13H1Z" fill="none" stroke="#1e1464" stroke-width="1.400"/><path d="M3 5h3M3 7.500h6M3 10h6" stroke="#1e1464" stroke-width="1.300"/><path d="M7 1v4h4Z" fill="#1e1464"/></svg><span class="px-1">通用结构</span></div></li>
                <li class="relative before:absolute before:top-0 before:left-[5px] before:h-full before:border-l before:border-dotted before:border-[#7c86a0]"><div class="flex h-[23px] items-center"><span class="mr-px ml-[6px] w-[15px] border-t border-dotted border-[#7c86a0]"></span><svg class="mr-[3px] size-[14px]" viewBox="0 0 14 14"><path d="M1 1h6.500L11 4.500V13H1Z" fill="none" stroke="#1e1464" stroke-width="1.400"/><path d="M3 5h3M3 7.500h6M3 10h6" stroke="#1e1464" stroke-width="1.300"/><path d="M7 1v4h4Z" fill="#1e1464"/></svg><span class="px-1">贝雷梁</span></div></li>
                <li class="relative before:absolute before:top-0 before:left-[5px] before:h-full before:border-l before:border-dotted before:border-[#7c86a0]"><div class="flex h-[23px] items-center"><span class="mr-px ml-[6px] w-[15px] border-t border-dotted border-[#7c86a0]"></span><svg class="mr-[3px] size-[14px]" viewBox="0 0 14 14"><path d="M1 1h6.500L11 4.500V13H1Z" fill="none" stroke="#1e1464" stroke-width="1.400"/><path d="M3 5h3M3 7.500h6M3 10h6" stroke="#1e1464" stroke-width="1.300"/><path d="M7 1v4h4Z" fill="#1e1464"/></svg><span class="px-1">梁式结构</span></div></li>
                <li class="relative before:absolute before:top-0 before:left-[5px] before:h-full before:border-l before:border-dotted before:border-[#7c86a0]"><div class="flex h-[23px] items-center"><span class="mr-px ml-[6px] w-[15px] border-t border-dotted border-[#7c86a0]"></span><svg class="mr-[3px] size-[14px]" viewBox="0 0 14 14"><path d="M1 1h6.500L11 4.500V13H1Z" fill="none" stroke="#1e1464" stroke-width="1.400"/><path d="M3 5h3M3 7.500h6M3 10h6" stroke="#1e1464" stroke-width="1.300"/><path d="M7 1v4h4Z" fill="#1e1464"/></svg><span class="px-1">拱结构</span></div></li>
                <li class="relative before:absolute before:top-0 before:left-[5px] before:h-3 before:border-l before:border-dotted before:border-[#7c86a0]"><div class="flex h-[23px] items-center"><span class="mr-px ml-[6px] w-[15px] border-t border-dotted border-[#7c86a0]"></span><svg class="mr-[3px] size-[14px]" viewBox="0 0 14 14"><path d="M1 1h6.500L11 4.500V13H1Z" fill="none" stroke="#1e1464" stroke-width="1.400"/><path d="M3 5h3M3 7.500h6M3 10h6" stroke="#1e1464" stroke-width="1.300"/><path d="M7 1v4h4Z" fill="#1e1464"/></svg><span class="px-1">节点类型</span></div></li>
              </ul>
            </li>
            <li class="relative before:absolute before:top-0 before:left-[5px] before:h-full before:border-l before:border-dotted before:border-[#7c86a0]">
              <div class="relative flex h-[23px] items-center"><button aria-label="折叠" class="size-[13px] border border-[#8ba0c8] bg-white"><svg class="size-[11px]" viewBox="0 0 11 11"><path d="M2 5.500h7" stroke="#7d9cc9" stroke-width="2"/></svg></button><span class="mr-px w-2 border-t border-dotted border-[#7c86a0]"></span><svg class="mr-[3px] size-[14px]" viewBox="0 0 14 14"><path d="M0 5h9v9H0Z" fill="#1e1464"/><path d="M2.500 3h8.500v8.500M5 1h8.500v8.500" stroke="#4a4a92" stroke-width="1.500" fill="none"/></svg><span class="px-1">荷载加载</span></div>
              <ul class="pl-[23px]">
                <li class="relative before:absolute before:top-0 before:left-[5px] before:h-full before:border-l before:border-dotted before:border-[#7c86a0]"><div class="flex h-[23px] items-center"><span class="mr-px ml-[6px] w-[15px] border-t border-dotted border-[#7c86a0]"></span><svg class="mr-[3px] size-[14px]" viewBox="0 0 14 14"><path d="M1 1h6.500L11 4.500V13H1Z" fill="none" stroke="#1e1464" stroke-width="1.400"/><path d="M3 5h3M3 7.500h6M3 10h6" stroke="#1e1464" stroke-width="1.300"/><path d="M7 1v4h4Z" fill="#1e1464"/></svg><span class="px-1">截面线荷载</span></div></li>
                <li class="relative before:absolute before:top-0 before:left-[5px] before:h-full before:border-l before:border-dotted before:border-[#7c86a0]"><div class="flex h-[23px] items-center"><span class="mr-px ml-[6px] w-[15px] border-t border-dotted border-[#7c86a0]"></span><svg class="mr-[3px] size-[14px]" viewBox="0 0 14 14"><path d="M1 1h6.500L11 4.500V13H1Z" fill="none" stroke="#1e1464" stroke-width="1.400"/><path d="M3 5h3M3 7.500h6M3 10h6" stroke="#1e1464" stroke-width="1.300"/><path d="M7 1v4h4Z" fill="#1e1464"/></svg><span class="px-1">主梁线荷载</span></div></li>
                <li class="relative before:absolute before:top-0 before:left-[5px] before:h-3 before:border-l before:border-dotted before:border-[#7c86a0]"><div class="flex h-[23px] items-center"><span class="mr-px ml-[6px] w-[15px] border-t border-dotted border-[#7c86a0]"></span><svg class="mr-[3px] size-[14px]" viewBox="0 0 14 14"><path d="M1 1h6.500L11 4.500V13H1Z" fill="none" stroke="#1e1464" stroke-width="1.400"/><path d="M3 5h3M3 7.500h6M3 10h6" stroke="#1e1464" stroke-width="1.300"/><path d="M7 1v4h4Z" fill="#1e1464"/></svg><span class="px-1">未知荷载</span></div></li>
              </ul>
            </li>
            <li class="relative before:absolute before:top-0 before:left-[5px] before:h-3 before:border-l before:border-dotted before:border-[#7c86a0]">
              <div class="relative flex h-[23px] items-center"><button aria-label="折叠" class="size-[13px] border border-[#8ba0c8] bg-white"><svg class="size-[11px]" viewBox="0 0 11 11"><path d="M2 5.500h7" stroke="#7d9cc9" stroke-width="2"/></svg></button><span class="mr-px w-2 border-t border-dotted border-[#7c86a0]"></span><svg class="mr-[3px] size-[14px]" viewBox="0 0 14 14"><path d="M0 5h9v9H0Z" fill="#1e1464"/><path d="M2.500 3h8.500v8.500M5 1h8.500v8.500" stroke="#4a4a92" stroke-width="1.500" fill="none"/></svg><span class="px-1">材料与截面</span></div>
              <ul class="pl-[23px]">
                <li class="relative before:absolute before:top-0 before:left-[5px] before:h-full before:border-l before:border-dotted before:border-[#7c86a0]"><div class="flex h-[23px] items-center"><span class="mr-px ml-[6px] w-[15px] border-t border-dotted border-[#7c86a0]"></span><svg class="mr-[3px] size-[14px]" viewBox="0 0 14 14"><path d="M1 1h6.500L11 4.500V13H1Z" fill="none" stroke="#1e1464" stroke-width="1.400"/><path d="M3 5h3M3 7.500h6M3 10h6" stroke="#1e1464" stroke-width="1.300"/><path d="M7 1v4h4Z" fill="#1e1464"/></svg><span class="bg-[#b3dcff] px-1 text-[15px] font-bold text-[#0000ff]">功能截面</span></div></li>
                <li class="relative before:absolute before:top-0 before:left-[5px] before:h-3 before:border-l before:border-dotted before:border-[#7c86a0]"><div class="flex h-[23px] items-center"><span class="mr-px ml-[6px] w-[15px] border-t border-dotted border-[#7c86a0]"></span><svg class="mr-[3px] size-[14px]" viewBox="0 0 14 14"><path d="M1 1h6.500L11 4.500V13H1Z" fill="none" stroke="#1e1464" stroke-width="1.400"/><path d="M3 5h3M3 7.500h6M3 10h6" stroke="#1e1464" stroke-width="1.300"/><path d="M7 1v4h4Z" fill="#1e1464"/></svg><span class="px-1">自定义截面</span></div></li>
              </ul>
            </li>
          </ul>
        </li>
      </ul>
    </aside>

    <div class="ml-[3px] flex min-w-0 flex-1 flex-col border-l border-[#b4c9e6]">
      <div class="relative ml-px min-h-0 flex-1 overflow-hidden border-b border-[#b4c9e6] bg-white">
        <!-- Box girder section -->
        <svg class="absolute top-[186px] left-[468px] h-[214px] w-[406px]" viewBox="0 0 406 214" fill="none" stroke="#2222ff">
          <path d="M.5 1.500H32L64 2.500 78 1.500H326L340 2.500 374 1.500H403.500V8.500L375 10.500 308.500 21.500V212.500H95.500V21.500L28 10.500.5 8.500Z"/>
          <path d="M152 14.500H252L280.500 23.500V170.500L260.500 180.500H142L123.500 170.500V23.500Z"/>
        </svg>
        <!-- Coordinate axes -->
        <svg class="absolute bottom-[11px] left-[13px] h-[76px] w-[100px]" viewBox="0 0 100 76">
          <path d="M8 67V20" stroke="#000" stroke-width="2"/><path d="m8 18 3 9H5Z" fill="#000"/>
          <path d="M8 67h40" stroke="#ff8420" stroke-width="2"/><path d="m57 67-9-3v6Z" fill="#ff8420"/>
          <circle cx="8" cy="67" r="4" fill="#0a0aff"/>
          <g font-family="'Liberation Serif','Noto Serif',serif" font-size="14" fill="#20183c"><text x="8" y="16">Y(N)</text><text x="58" y="67">X(E)</text></g>
        </svg>
      </div>
      <div class="mt-[3px] ml-px flex flex-col border-t border-[#b4c9e6] bg-white">
        <p class="h-[52px] pt-px pl-[3px]">命令: 已删除1 个对象</p>
        <div class="ml-[3px] flex h-[25px] items-center border-t border-[#b4c9e6] pt-0.5">
          <label for="cmd">命令:</label>
          <input id="cmd" type="text" class="ml-1 min-w-0 flex-1 bg-transparent outline-none">
        </div>
      </div>
    </div>
  </main>

  <!-- Status bar -->
  <footer class="mx-[3px] mb-[3px] flex h-[35px] shrink-0 items-center border-t border-white bg-[#e3f0fe] whitespace-nowrap">
    <span class="w-[74px] pl-2">长度：m</span>
    <output class="mr-[5px] flex h-[31px] w-[250px] items-center justify-center border border-[#b0c6e4] border-r-white border-b-white bg-[#e3edfc]">181.6548,360.3360</output>
    <button aria-pressed="true" class="h-[34px] w-[50px] rounded-[3px] border border-[#a18c62] bg-[linear-gradient(180deg,#eddfc6_0%,#e9d4ac_25%,#f0cd92_48%,#ffa93c_50%,#ffae3c_68%,#ffc640_74%,#ffc840_100%)] pt-0.5">端点</button>
    <button aria-pressed="true" class="h-[34px] w-[50px] rounded-[3px] border border-[#a18c62] bg-[linear-gradient(180deg,#eddfc6_0%,#e9d4ac_25%,#f0cd92_48%,#ffa93c_50%,#ffae3c_68%,#ffc640_74%,#ffc840_100%)] pt-0.5">中点</button>
    <button aria-pressed="true" class="h-[34px] w-[50px] rounded-[3px] border border-[#a18c62] bg-[linear-gradient(180deg,#eddfc6_0%,#e9d4ac_25%,#f0cd92_48%,#ffa93c_50%,#ffae3c_68%,#ffc640_74%,#ffc840_100%)] pt-0.5">圆心</button>
    <button aria-pressed="true" class="h-[34px] w-[50px] rounded-[3px] border border-[#a18c62] bg-[linear-gradient(180deg,#eddfc6_0%,#e9d4ac_25%,#f0cd92_48%,#ffa93c_50%,#ffae3c_68%,#ffc640_74%,#ffc840_100%)] pt-0.5">垂足</button>
    <button aria-pressed="false" class="h-[34px] w-[50px] pt-0.5">交点</button>
    <button aria-pressed="true" class="ml-[6px] h-[34px] w-[50px] rounded-[3px] border border-[#a18c62] bg-[linear-gradient(180deg,#eddfc6_0%,#e9d4ac_25%,#f0cd92_48%,#ffa93c_50%,#ffae3c_68%,#ffc640_74%,#ffc840_100%)] pt-0.5">正交</button>
    <span class="mr-[6px] ml-[6px] h-full w-[2px] bg-[#b4c9e6]"></span>
    <label for="dim" class="w-[43px]">标注：</label>
    <div class="relative mr-[10px] h-[25px] w-[160px]">
      <select id="dim" class="size-full appearance-none border border-[#8fb3e2] bg-white px-1"><option></option></select>
      <svg class="pointer-events-none absolute top-[10px] right-[7px] h-[5px] w-[7px]" viewBox="0 0 7 5"><path d="M0 0h7L3.500 4.500Z" fill="#4370b8"/></svg>
    </div>
    <button>页面设置</button>
    <span class="ml-[13px] h-full w-px bg-[#b4c9e6]"></span>
    <div class="mr-[58px] ml-auto flex items-center gap-[3px]">
      <svg class="h-4 w-[15px]" viewBox="0 0 15 16"><defs><linearGradient id="fn"><stop offset="0" stop-color="#8a84a4"/><stop offset=".4" stop-color="#eceaf4"/><stop offset="1" stop-color="#6c6690"/></linearGradient></defs><path d="M.7 2.500 6 9v6h3V9l5.300-6.500Z" fill="url(#fn)" stroke="#4f4a70" stroke-width=".9"/><ellipse cx="7.500" cy="2.600" rx="6.800" ry="2" fill="#d5d1e4" stroke="#5d587c" stroke-width=".9"/></svg>
      <span class="w-[43px] pl-px">: 0 / 1</span>
    </div>
    <a href="https://www.rbcce.com" class="mr-[19px] text-[#0000ff] underline">Https://www.rbcce.com</a>
  </footer>

  <!-- Application button -->
  <button aria-label="应用程序菜单" class="absolute top-[6px] left-[9px] size-[48px]">
    <svg class="size-full" viewBox="0 0 48 48">
      <defs>
        <radialGradient id="orb" cy=".3"><stop offset="0" stop-color="#dcebfc"/><stop offset=".7" stop-color="#b2d2f5"/><stop offset="1" stop-color="#9cc2ee"/></radialGradient>
        <linearGradient id="tile" x1="0" y1="0" x2="0" y2="1"><stop offset="0" stop-color="#1b62c4"/><stop offset="1" stop-color="#0b1c50"/></linearGradient>
      </defs>
      <circle cx="24" cy="24" r="22.500" fill="url(#orb)" stroke="#86aee0"/><circle cx="24" cy="24" r="21" fill="none" stroke="#e8f4ff" stroke-width="2"/>
      <rect x="10" y="11" width="27" height="27" fill="url(#tile)"/>
      <text x="23.500" y="27" text-anchor="middle" font-size="19" font-weight="900" fill="#f9c440" stroke="#12306e" stroke-width="2" paint-order="stroke" font-family="Roboto,Inter,sans-serif">RB</text>
      <text x="23.500" y="36.500" text-anchor="middle" font-size="10" font-weight="700" fill="#eef3fb" font-family="Inter,sans-serif">CCE</text>
    </svg>
  </button>
</div>
</body>
</html>
